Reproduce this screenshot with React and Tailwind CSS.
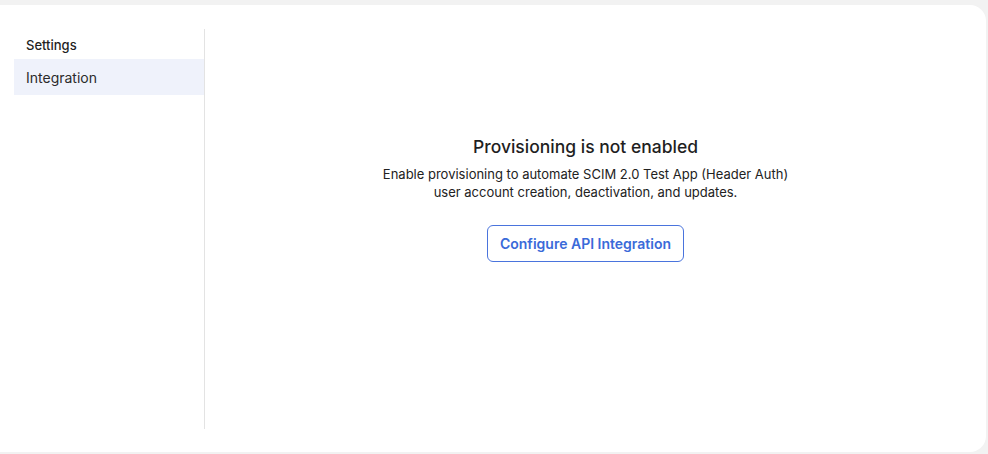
import React from 'react';

export default function App() {
  return (
    <div
      className="h-[454px] w-[988px] bg-[#f2f2f2] pt-[5px] pb-[2px] pr-[2px]"
      style={{ fontFamily: 'Inter, "Noto Sans", sans-serif' }}
    >
      <div className="flex h-full rounded-r-2xl bg-white pl-[14px] pt-[24px] pb-[23px]">
        {/* Sidebar */}
        <aside className="w-[191px] border-r border-[#e3e3e3]">
          <div className="px-3 pt-[8px] pb-[6px] text-[13px] font-medium leading-[16px] text-[#1f1f1f]">
            Settings
          </div>
          <div className="flex h-[36px] items-center bg-[#eff2fb] px-3 text-[14px] text-[#2b2b2b]">
            Integration
          </div>
        </aside>

        {/* Main */}
        <main className="flex flex-1 flex-col items-center pt-[106px] pr-[20px]">
          <h2 className="text-[17.5px] font-medium leading-[24px] text-[#1f1f1f]">
            Provisioning is not enabled
          </h2>
          <p className="mt-[6px] text-center text-[13px] leading-[18px] text-[#222]">
            Enable provisioning to automate SCIM 2.0 Test App (Header Auth)
            <br />
            user account creation, deactivation, and updates.
          </p>
          <button className="mt-[24px] h-[37px] rounded-md border border-[#4a74dd] px-[12px] text-[14px] font-semibold text-[#3a6ad9]">
            Configure API Integration
          </button>
        </main>
      </div>
    </div>
  );
}
